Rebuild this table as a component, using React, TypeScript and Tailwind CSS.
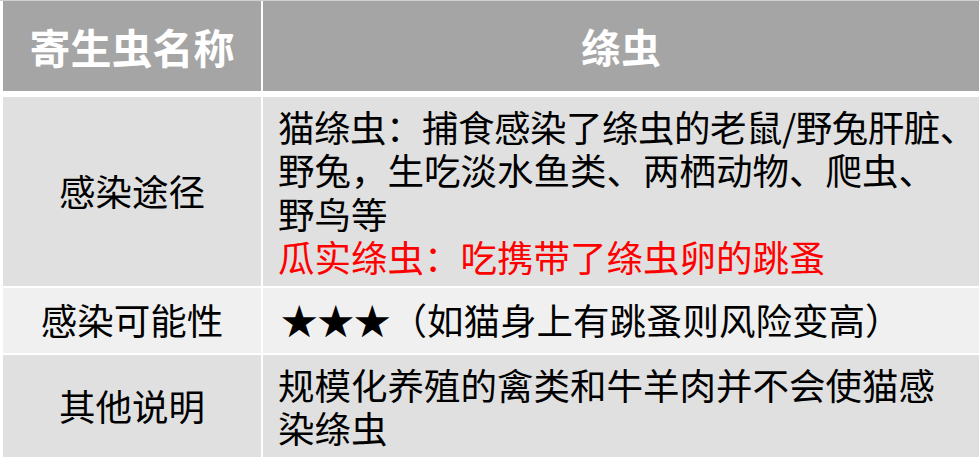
const font = { fontFamily: '"Noto Sans CJK SC", "Liberation Sans", sans-serif' };

function Cell({ children, className = "" }: { children: React.ReactNode; className?: string }) {
  return <div className={`flex items-center overflow-hidden ${className}`}>{children}</div>;
}

export default function App() {
  return (
    <div
      className="w-[980px] h-[462px] bg-white border-t border-[#d0d0d0] pl-[3px] flex flex-col text-black"
      style={font}
    >
      {/* header */}
      <div className="grid grid-cols-[258px_716px] gap-[2px] h-[90px]">
        <Cell className="bg-[#a5a5a5] justify-center">
          <span className="text-[41px] font-bold text-white leading-none">寄生虫名称</span>
        </Cell>
        <Cell className="bg-[#a5a5a5] justify-center">
          <span className="text-[40px] font-bold text-white leading-none">绦虫</span>
        </Cell>
      </div>

      <div className="grid grid-cols-[258px_716px] gap-[2px] h-[189px] mt-[6px]">
        <Cell className="bg-[#e0e0e0] justify-center">
          <span className="text-[36.5px] leading-none">感染途径</span>
        </Cell>
        <Cell className="bg-[#e0e0e0] pl-[15px]">
          <div className="text-[36.5px] leading-[43.5px] whitespace-nowrap">
            <div className="tracking-[-0.5px]">猫绦虫：捕食感染了绦虫的老鼠/野兔肝脏、</div>
            <div>野兔，生吃淡水鱼类、两栖动物、爬虫、</div>
            <div>野鸟等</div>
            <div className="text-[#ff0000]">瓜实绦虫：吃携带了绦虫卵的跳蚤</div>
          </div>
        </Cell>
      </div>

      <div className="grid grid-cols-[258px_716px] gap-[2px] h-[65px] mt-[2px]">
        <Cell className="bg-[#f0f0f0] justify-center">
          <span className="text-[36.5px] leading-none">感染可能性</span>
        </Cell>
        <Cell className="bg-[#f0f0f0] pl-[18px]">
          <span className="text-[36.5px] leading-none whitespace-nowrap">★★★（如猫身上有跳蚤则风险变高）</span>
        </Cell>
      </div>

      <div className="grid grid-cols-[258px_716px] gap-[2px] h-[102px] mt-[2px]">
        <Cell className="bg-[#e0e0e0] justify-center">
          <span className="text-[36.5px] leading-none">其他说明</span>
        </Cell>
        <Cell className="bg-[#e0e0e0] pl-[15px]">
          <div className="text-[36.5px] leading-[43.5px] whitespace-nowrap">
            <div>规模化养殖的禽类和牛羊肉并不会使猫感</div>
            <div>染绦虫</div>
          </div>
        </Cell>
      </div>
    </div>
  );
}
